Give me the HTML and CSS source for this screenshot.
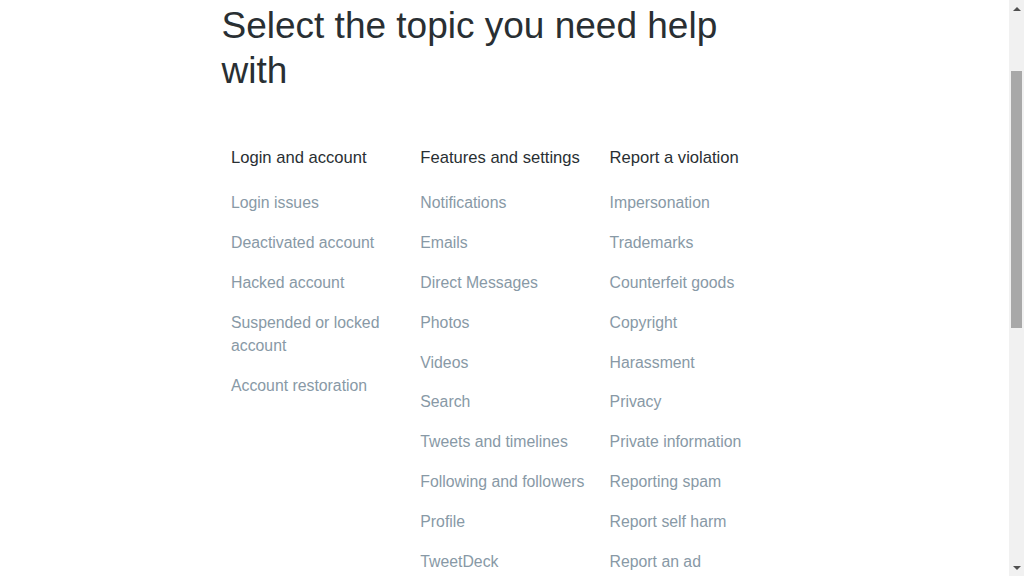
FILE: index.html
```html
<!DOCTYPE html>
<html lang="en">
<head>
<meta charset="utf-8">
<title>Help Center – Select a topic</title>
<link rel="stylesheet" href="styles.css">
</head>
<body>
<div class="page">
  <main class="viewport">
    <div class="container">
      <h1 class="title">Select the topic you need help with</h1>
      <div class="topics">
        <section class="topic">
          <h2 class="topic-head">Login and account</h2>
          <ul class="links">
            <li><a href="#">Login issues</a></li>
            <li><a href="#">Deactivated account</a></li>
            <li><a href="#">Hacked account</a></li>
            <li><a href="#">Suspended or locked account</a></li>
            <li><a href="#">Account restoration</a></li>
          </ul>
        </section>
        <section class="topic">
          <h2 class="topic-head">Features and settings</h2>
          <ul class="links">
            <li><a href="#">Notifications</a></li>
            <li><a href="#">Emails</a></li>
            <li><a href="#">Direct Messages</a></li>
            <li><a href="#">Photos</a></li>
            <li><a href="#">Videos</a></li>
            <li><a href="#">Search</a></li>
            <li><a href="#">Tweets and timelines</a></li>
            <li><a href="#">Following and followers</a></li>
            <li><a href="#">Profile</a></li>
            <li><a href="#">TweetDeck</a></li>
          </ul>
        </section>
        <section class="topic">
          <h2 class="topic-head">Report a violation</h2>
          <ul class="links">
            <li><a href="#">Impersonation</a></li>
            <li><a href="#">Trademarks</a></li>
            <li><a href="#">Counterfeit goods</a></li>
            <li><a href="#">Copyright</a></li>
            <li><a href="#">Harassment</a></li>
            <li><a href="#">Privacy</a></li>
            <li><a href="#">Private information</a></li>
            <li><a href="#">Reporting spam</a></li>
            <li><a href="#">Report self harm</a></li>
            <li><a href="#">Report an ad</a></li>
          </ul>
        </section>
      </div>
    </div>
  </main>
  <div class="scrollbar" aria-hidden="true">
    <div class="sb-btn"><span class="arrow-up"></span></div>
    <div class="sb-track"><div class="sb-thumb"></div></div>
    <div class="sb-btn"><span class="arrow-down"></span></div>
  </div>
</div>
</body>
</html>
```

FILE: styles.css
```css
html, body {
  margin: 0;
  padding: 0;
  background: #ffffff;
}

body {
  font-family: "Liberation Sans", Arial, sans-serif;
}

.page {
  display: flex;
  width: 1024px;
  height: 576px;
  overflow: hidden;
}

.viewport {
  flex: 1;
  overflow: hidden;
}

.container {
  width: 566px;
  margin: 0 auto;
  padding-top: 3px;
}

.title {
  margin: 0;
  max-width: 540px;
  font-size: 37px;
  line-height: 45px;
  font-weight: 400;
  color: #292f33;
}

.topics {
  display: grid;
  grid-template-columns: repeat(3, 189.3px);
  padding-left: 9.5px;
  margin-top: 53px;
}

.topic {
  padding-right: 15px;
}

.topic-head {
  margin: 0;
  font-size: 16.6px;
  line-height: 23px;
  font-weight: 400;
  color: #292f33;
}

.links {
  list-style: none;
  margin: 22px 0 0;
  padding: 0;
  display: flex;
  flex-direction: column;
  gap: 16.9px;
}

.links li {
  font-size: 15.8px;
  line-height: 23px;
}

.links a {
  color: #8899a6;
  text-decoration: none;
}

.scrollbar {
  width: 15px;
  background: #f1f1f1;
  display: flex;
  flex-direction: column;
}

.sb-btn {
  height: 17px;
  display: flex;
  align-items: center;
  justify-content: center;
}

.arrow-up {
  width: 0;
  height: 0;
  border-left: 4px solid transparent;
  border-right: 4px solid transparent;
  border-bottom: 4px solid #505050;
}

.arrow-down {
  width: 0;
  height: 0;
  border-left: 4px solid transparent;
  border-right: 4px solid transparent;
  border-top: 4px solid #505050;
}

.sb-track {
  flex: 1;
  padding: 0 2px;
}

.sb-thumb {
  margin-top: 54px;
  height: 257px;
  background: #a8a8a8;
}
```
